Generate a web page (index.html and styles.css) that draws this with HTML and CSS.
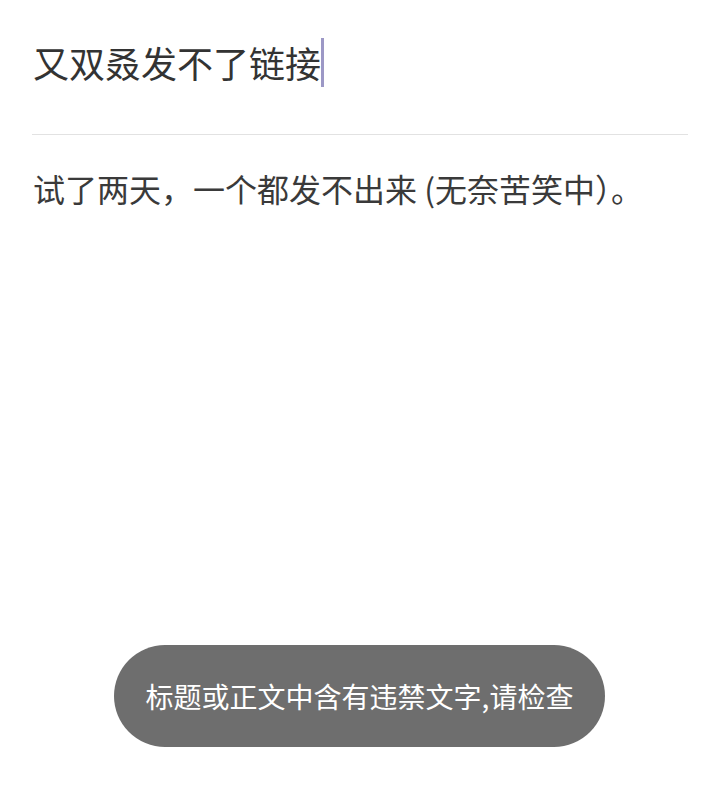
FILE: index.html
```html
<!DOCTYPE html>
<html lang="zh-CN">
<head>
<meta charset="utf-8">
<title>编辑</title>
<link rel="stylesheet" href="styles.css">
</head>
<body>
<main class="editor">
  <div class="title-row">
    <span class="title">又双叒发不了链接</span><span class="cursor"></span>
  </div>
  <hr class="divider">
  <p class="content">试了两天，一个都发不出来 (无奈苦笑中）。</p>
</main>
<div class="toast">标题或正文中含有违禁文字,请检查</div>
</body>
</html>
```
FILE: styles.css
```css
html, body {
  margin: 0;
  padding: 0;
  background: #ffffff;
}
body {
  width: 720px;
  height: 788px;
  position: relative;
  overflow: hidden;
  font-family: "Noto Sans CJK SC", "Noto Sans", sans-serif;
  color: #333333;
}
.editor {
  padding: 37px 32px 0 32px;
}
.title-row {
  display: flex;
  align-items: center;
  height: 50px;
}
.title {
  font-size: 36px;
  line-height: 50px;
  color: #333333;
  padding-left: 1px;
}
.cursor {
  width: 3px;
  height: 49px;
  background: #9c98c6;
  margin-left: 0;
}
.divider {
  border: 0;
  height: 1px;
  background: #e2e2e2;
  margin: 47px 0 0 0;
}
.content {
  margin: 31px 0 0 0;
  font-size: 32px;
  line-height: 44px;
  color: #3a3a3a;
  padding-left: 1px;
}
.toast {
  position: absolute;
  left: 114px;
  top: 645px;
  width: 491px;
  height: 102px;
  border-radius: 51px;
  background: #6e6e6e;
  color: #ffffff;
  font-size: 28px;
  display: flex;
  align-items: center;
  justify-content: center;
}
```
